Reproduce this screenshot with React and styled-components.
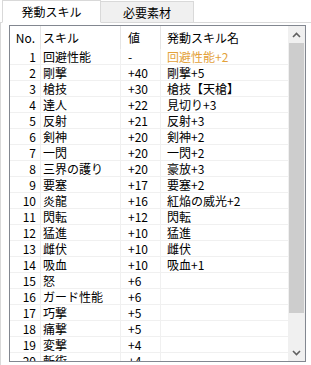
import styled, { createGlobalStyle } from "styled-components";

const GlobalStyle = createGlobalStyle`
  body {
    margin: 0;
    background: #ffffff;
    font-family: "Noto Sans CJK JP", "Noto Sans", sans-serif;
  }
`;

const rows = [
  ["回避性能", "-", "回避性能+2", true],
  ["剛撃", "+40", "剛撃+5"],
  ["槍技", "+30", "槍技【天槍】"],
  ["達人", "+22", "見切り+3"],
  ["反射", "+21", "反射+3"],
  ["剣神", "+20", "剣神+2"],
  ["一閃", "+20", "一閃+2"],
  ["三界の護り", "+20", "豪放+3"],
  ["要塞", "+17", "要塞+2"],
  ["炎龍", "+16", "紅焔の威光+2"],
  ["閃転", "+12", "閃転"],
  ["猛進", "+10", "猛進"],
  ["雌伏", "+10", "雌伏"],
  ["吸血", "+10", "吸血+1"],
  ["怒", "+6", ""],
  ["ガード性能", "+6", ""],
  ["巧撃", "+5", ""],
  ["痛撃", "+5", ""],
  ["変撃", "+4", ""],
  ["斬術", "+4", ""],
];

const COLS = "31px 80px 40px 128px";

export default function App() {
  return (
    <>
      <GlobalStyle />
      <Window>
        <TabBar>
          <Tab active>発動スキル</Tab>
          <Tab>必要素材</Tab>
        </TabBar>
        <Panel>
          <ListBox>
            <Table>
              <HeaderRow>
                <HeadCell align="right" pad="0 5px 0 0">No.</HeadCell>
                <HeadCell>スキル</HeadCell>
                <HeadCell pad="0 0 0 7px">値</HeadCell>
                <HeadCell pad="0 0 0 6px" last>発動スキル名</HeadCell>
              </HeaderRow>
              {rows.map(([skill, value, name, hit], i) => (
                <Row key={i}>
                  <Cell align="right" pad="0 4px 0 0">{i + 1}</Cell>
                  <Cell>{skill}</Cell>
                  <Cell pad="0 0 0 7px">{value}</Cell>
                  <Cell pad="0 0 0 6px" last highlight={hit}>
                    {name}
                  </Cell>
                </Row>
              ))}
            </Table>
            <ScrollBar>
              <Arrow>
                <svg width="9" height="6" viewBox="0 0 9 6">
                  <path d="M1 5 L4.5 1.5 L8 5" fill="none" stroke="#606060" strokeWidth="1.6" />
                </svg>
              </Arrow>
              <Track>
                <Thumb />
              </Track>
              <Arrow>
                <svg width="9" height="6" viewBox="0 0 9 6">
                  <path d="M1 1 L4.5 4.5 L8 1" fill="none" stroke="#606060" strokeWidth="1.6" />
                </svg>
              </Arrow>
            </ScrollBar>
          </ListBox>
        </Panel>
      </Window>
    </>
  );
}

const Window = styled.div`
  width: 311px;
  height: 365px;
  display: flex;
  flex-direction: column;
  overflow: hidden;
  font-size: 12px;
  color: #000;
`;

const TabBar = styled.div`
  display: flex;
  align-items: flex-end;
  height: 23px;
  padding-left: 2px;
  box-sizing: border-box;
  border-bottom: 1px solid #d9d9d9;
`;

const Tab = styled.div`
  box-sizing: border-box;
  height: ${({ active }) => (active ? "23px" : "21px")};
  width: ${({ active }) => (active ? "99px" : "93px")};
  margin-bottom: ${({ active }) => (active ? "-1px" : "0")};
  display: flex;
  align-items: center;
  justify-content: center;
  padding-top: ${({ active }) => (active ? "0" : "2px")};
  background: ${({ active }) => (active ? "#ffffff" : "#f0f0f0")};
  border: 1px solid #d9d9d9;
  border-bottom: ${({ active }) => (active ? "1px solid #ffffff" : "none")};
  border-left: ${({ active }) => (active ? "1px solid #d9d9d9" : "none")};
  line-height: 16px;
`;

const Panel = styled.div`
  flex: 1;
  display: flex;
  padding: 2px 5px 3px 8px;
  border-left: 1px solid #d9d9d9;
  background: #ffffff;
  min-height: 0;
`;

const ListBox = styled.div`
  flex: 1;
  display: flex;
  border: 1px solid #828790;
  overflow: hidden;
  background: #fff;
`;

const Table = styled.div`
  flex: 1;
  overflow: hidden;
`;

const HeaderRow = styled.div`
  display: grid;
  grid-template-columns: ${COLS};
  height: 23px;
`;

const HeadCell = styled.div`
  display: flex;
  align-items: center;
  justify-content: ${({ align }) => (align === "right" ? "flex-end" : "flex-start")};
  padding: ${({ pad }) => pad || "0 0 0 2px"};
  border-right: ${({ last }) => (last ? "none" : "1px solid #e5e5e5")};
  line-height: 16px;
  white-space: nowrap;
`;

const Row = styled.div`
  display: grid;
  grid-template-columns: ${COLS};
  height: 16px;
  box-sizing: border-box;
  border-bottom: 1px solid #f0f0f0;
`;

const Cell = styled.div`
  display: flex;
  align-items: center;
  justify-content: ${({ align }) => (align === "right" ? "flex-end" : "flex-start")};
  padding: ${({ pad }) => pad || "0 0 0 2px"};
  border-right: ${({ last }) => (last ? "none" : "1px solid #f0f0f0")};
  color: ${({ highlight }) => (highlight ? "#e3a23b" : "#000")};
  line-height: 15px;
  white-space: nowrap;
  overflow: hidden;
`;

const ScrollBar = styled.div`
  width: 17px;
  display: flex;
  flex-direction: column;
  background: #f0f0f0;
`;

const Arrow = styled.div`
  height: 17px;
  display: flex;
  align-items: center;
  justify-content: center;
`;

const Track = styled.div`
  flex: 1;
  display: flex;
  flex-direction: column;
  padding: 0 1px;
`;

const Thumb = styled.div`
  height: 270px;
  background: #cdcdcd;
`;
